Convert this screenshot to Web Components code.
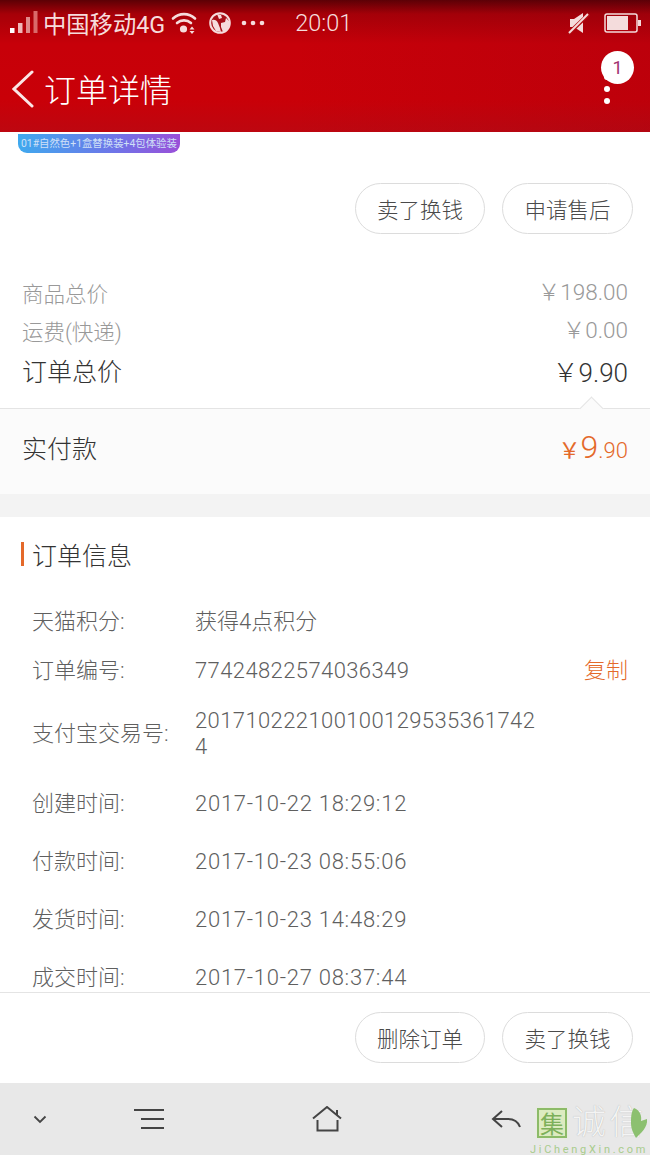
<!DOCTYPE html>
<html lang="zh">
<head>
<meta charset="utf-8">
<title>订单详情</title>
<style>
    html, body { margin: 0; padding: 0; background: #fff; }
    body { font-family: Roboto, "Noto Sans CJK SC", sans-serif; }
</style>
</head>
<body>
<order-page>
    <app-header slot="top" title="订单详情" badge="1"></app-header>
    <product-tag>01#自然色+1盒替换装+4包体验装</product-tag>
    <action-bar>
        <pill-button>卖了换钱</pill-button>
        <pill-button>申请售后</pill-button>
    </action-bar>
    <price-summary></price-summary>
    <info-list>
        <info-row label="天猫积分:" value="获得4点积分" height="49"></info-row>
        <info-row label="订单编号:" value="77424822574036349" action="复制" height="50" spacing=".4"></info-row>
        <info-row label="支付宝交易号:" value="2017102221001001295353617424" height="79" under="3" spacing=".4"></info-row>
        <info-row label="创建时间:" value="2017-10-22 18:29:12" height="58" spacing=".74"></info-row>
        <info-row label="付款时间:" value="2017-10-23 08:55:06" height="58" spacing=".74"></info-row>
        <info-row label="发货时间:" value="2017-10-23 14:48:29" height="58" spacing=".74"></info-row>
        <info-row label="成交时间:" value="2017-10-27 08:37:44" height="58" spacing=".74"></info-row>
    </info-list>
    <action-bar slot="bottom" footer>
        <pill-button>删除订单</pill-button>
        <pill-button>卖了换钱</pill-button>
    </action-bar>
    <nav-bar slot="nav"></nav-bar>
</order-page>

<script>
class OrderPage extends HTMLElement {
    constructor() {
        super();
        this.attachShadow({mode: "open"});
        this.shadowRoot.innerHTML = `
        <style>
            :host {
                display: flex;
                flex-direction: column;
                width: 650px;
                height: 1155px;
                overflow: hidden;
                background: #fff;
            }
            main {
                flex: 1;
                min-height: 0;
                overflow: hidden;
            }
        </style>
        <slot name="top"></slot>
        <main><slot></slot></main>
        <slot name="bottom"></slot>
        <slot name="nav"></slot>
        `;
    }
}
customElements.define("order-page", OrderPage);

class AppHeader extends HTMLElement {
    constructor() {
        super();
        this.attachShadow({mode: "open"});
        const title = this.getAttribute("title");
        const badge = this.getAttribute("badge");
        this.shadowRoot.innerHTML = `
        <style>
            :host {
                display: block;
                height: 132px;
                color: #fff;
                background:
                    linear-gradient(90deg, rgba(90, 0, 30, 0) 45%, rgba(90, 0, 30, .1) 100%),
                    linear-gradient(180deg, #5c0005 0, #a60008 14px, #c70009 44px, #c90008 100px, #bd0710 132px);
            }
            .status {
                display: flex;
                align-items: center;
                height: 46px;
                padding: 0 9px 0 10px;
                color: #f6dcdc;
            }
            .carrier { font-size: 23.300px; margin-left: 5px; white-space: nowrap; }
            .wifi { margin-left: 6px; }
            .globe { margin-left: 12px; }
            .dots { margin-left: 10px; }
            .time { font-size: 23.500px; margin-left: 30px; font-weight: 300; }
            .right { margin-left: auto; display: flex; align-items: center; gap: 14px; }
            .bar {
                display: flex;
                align-items: center;
                height: 86px;
                padding: 0 40px 0 12px;
            }
            h1 {
                margin: 0 0 3px 9px;
                font-size: 32px;
                font-weight: 300;
                font-family: "Noto Sans CJK SC", sans-serif;
            }
            .more {
                margin-left: auto;
                display: flex;
                flex-direction: column;
                gap: 6px;
                position: relative;
            }
            .badge {
                position: absolute;
                left: -3px;
                top: -23px;
                width: 33px;
                height: 33px;
                border-radius: 50%;
                background: #fff;
                color: #a03070;
                font-size: 18px;
                display: flex;
                align-items: center;
                justify-content: center;
            }
            .dot { width: 6px; height: 6px; border-radius: 50%; background: #fff; }
        </style>
        <div class="status">
            <svg width="28" height="24" viewBox="0 0 28 24">
                <rect x="0" y="17" width="4.500" height="5" fill="#fff"/>
                <rect x="8" y="12" width="4.500" height="10" fill="#f0b8b8"/>
                <rect x="16" y="6" width="4" height="16" fill="#e08a8a"/>
                <rect x="23.500" y="0" width="4" height="22" fill="#d96a6a"/>
            </svg>
            <span class="carrier">中国移动4G</span>
            <svg class="wifi" width="26" height="24" viewBox="0 0 26 24" fill="none" stroke="#f6dcdc" stroke-width="2.600" stroke-linecap="round">
                <path d="M2 7.500a16 16 0 0 1 22 0"/>
                <path d="M6 12a10.500 10.500 0 0 1 14 0"/>
                <circle cx="12.500" cy="18" r="3.600" fill="#f6dcdc" stroke="none"/>
                <path d="M21 15.500l2.500 3h-5zM18.500 20h5L21 23z" fill="#f6dcdc" stroke="none"/>
            </svg>
            <svg class="globe" width="22" height="22" viewBox="0 0 22 22">
                <circle cx="11" cy="11" r="9.800" fill="#a81018" stroke="#f6dcdc" stroke-width="2"/>
                <path d="M3 8q4-1 6 3l2 5 1 4-5-1-3-5zM12 11l4-1 1-4 3 3 0 5-3 5-3 1-2-5zM8 2l4 1 1 3-3 1z" fill="#f6dcdc"/>
            </svg>
            <svg class="dots" width="24" height="6" viewBox="0 0 24 6" fill="#f6dcdc">
                <circle cx="3" cy="3" r="2.300"/><circle cx="12" cy="3" r="2.300"/><circle cx="21" cy="3" r="2.300"/>
            </svg>
            <span class="time">20:01</span>
            <div class="right">
                <svg width="22" height="24" viewBox="0 0 22 24" fill="#f4dcdc">
                    <path d="M2 8h4l9-6v20l-9-6H2z"/>
                    <path d="M0 23L21 3" stroke="#b30a10" stroke-width="4"/>
                    <path d="M1 22L20 3" stroke="#f4dcdc" stroke-width="2"/>
                </svg>
                <svg width="37" height="20" viewBox="0 0 37 20">
                    <rect x="1" y="1" width="32" height="18" rx="2" fill="none" stroke="#f4dcdc" stroke-width="1.500"/>
                    <rect x="3" y="3" width="21" height="14" fill="#f4dcdc"/>
                    <rect x="34" y="7" width="3" height="6" fill="#f4dcdc"/>
                </svg>
            </div>
        </div>
        <div class="bar">
            <svg width="23" height="38" viewBox="0 0 23 38" fill="none" stroke="#fbe6e6" stroke-width="3" stroke-linecap="round">
                <path d="M20 2L2 19l18 17"/>
            </svg>
            <h1>${title}</h1>
            <div class="more">
                <div class="dot"></div>
                <div class="dot"></div>
                <div class="dot"></div>
                <div class="badge">${badge}</div>
            </div>
        </div>
        `;
    }
}
customElements.define("app-header", AppHeader);

class ProductTag extends HTMLElement {
    constructor() {
        super();
        this.attachShadow({mode: "open"});
        this.shadowRoot.innerHTML = `
        <style>
            :host {
                display: block;
                padding: 2px 0 0 18px;
                height: 49px;
            }
            span {
                display: inline-block;
                height: 19px;
                line-height: 20px;
                padding: 0 3px;
                width: 156px;
                border-radius: 0 0 9px 9px;
                background: linear-gradient(90deg, #3fa9ee, #6f74e8 60%, #9a4fd8);
                color: #cfe0f7;
                font-size: 10.400px;
                white-space: nowrap;
                overflow: hidden;
            }
        </style>
        <span><slot></slot></span>
        `;
    }
}
customElements.define("product-tag", ProductTag);

class ActionBar extends HTMLElement {
    constructor() {
        super();
        this.attachShadow({mode: "open"});
        this.shadowRoot.innerHTML = `
        <style>
            :host {
                display: flex;
                justify-content: flex-end;
                gap: 17px;
                padding: 0 17px 0 0;
                height: 85px;
                box-sizing: border-box;
            }
            :host([footer]) {
                height: 91px;
                padding-top: 19px;
                border-top: 1px solid #e4e4e4;
                background: #fff;
            }
        </style>
        <slot></slot>
        `;
    }
}
customElements.define("action-bar", ActionBar);

class PillButton extends HTMLElement {
    constructor() {
        super();
        this.attachShadow({mode: "open"});
        this.shadowRoot.innerHTML = `
        <style>
            :host {
                display: flex;
                align-items: center;
                justify-content: center;
                box-sizing: border-box;
                width: 131px;
                height: 51px;
                border: 1px solid #dcdcdc;
                border-radius: 26px;
                color: #4a4a4a;
                font-size: 21.500px;
                font-weight: 300;
                font-family: "Noto Sans CJK SC", sans-serif;
            }
            :host(:first-child) { width: 130px; }
        </style>
        <slot></slot>
        `;
    }
}
customElements.define("pill-button", PillButton);

class PriceSummary extends HTMLElement {
    constructor() {
        super();
        this.attachShadow({mode: "open"});
        this.shadowRoot.innerHTML = `
        <style>
            :host {
                display: block;
                font-weight: 300;
            }
            .lines {
                display: grid;
                grid-template-rows: 38px 38px 42px;
                align-content: start;
                height: 140px;
                padding: 5px 22px 0;
                box-sizing: border-box;
            }
            .line {
                display: flex;
                justify-content: space-between;
                align-items: center;
                color: #999;
            }
            .line.total { color: #333; }
            .line b { font-weight: 300; font-size: 22.500px; position: relative; top: -2px; }
            .line.total b { font-size: 26px; top: 0; }
            .line span { font-size: 21.500px; }
            .line.total span { font-size: 25px; }
            .pay {
                position: relative;
                display: flex;
                justify-content: space-between;
                align-items: center;
                height: 86px;
                padding: 0 22px 10px;
                background: #fbfbfb;
                border-top: 1px solid #e4e4e4;
                box-sizing: border-box;
                color: #333;
                font-size: 25px;
            }
            .pay::before {
                content: "";
                position: absolute;
                right: 50px;
                top: -9px;
                width: 16px;
                height: 16px;
                background: #fbfbfb;
                border-top: 1px solid #e4e4e4;
                border-left: 1px solid #e4e4e4;
                transform: rotate(45deg);
            }
            .amount { color: #e4692a; font-size: 22px; font-weight: 300; display: flex; align-items: baseline; }
            .amount u { text-decoration: none; font-weight: 400; }
            .amount i { font-style: normal; font-size: 32px; }
            .gap { height: 23px; background: #f3f3f3; }
        </style>
        <div class="lines">
            <div class="line"><span>商品总价</span><b>￥198.00</b></div>
            <div class="line"><span>运费(快递)</span><b>￥0.00</b></div>
            <div class="line total"><span>订单总价</span><b>￥9.90</b></div>
        </div>
        <div class="pay">
            <span>实付款</span>
            <div class="amount"><u>￥</u><i>9</i>.90</div>
        </div>
        <div class="gap"></div>
        `;
    }
}
customElements.define("price-summary", PriceSummary);

class InfoList extends HTMLElement {
    constructor() {
        super();
        this.attachShadow({mode: "open"});
        this.shadowRoot.innerHTML = `
        <style>
            :host { display: block; }
            h2 {
                display: flex;
                align-items: center;
                box-sizing: border-box;
                margin: 0;
                height: 80px;
                padding: 0 0 7px 21px;
                font-size: 25px;
                font-weight: 300;
                color: #333;
            }
            h2::before {
                content: "";
                width: 3px;
                height: 24px;
                margin-right: 8px;
                background: #e4692a;
            }
        </style>
        <h2>订单信息</h2>
        <slot></slot>
        `;
    }
}
customElements.define("info-list", InfoList);

class InfoRow extends HTMLElement {
    constructor() {
        super();
        this.attachShadow({mode: "open"});
        const action = this.getAttribute("action");
        const under = this.getAttribute("under") || 0;
        const spacing = this.getAttribute("spacing") || 0;
        this.shadowRoot.innerHTML = `
        <style>
            :host {
                display: grid;
                grid-template-columns: 163px 342px 1fr;
                align-items: center;
                box-sizing: border-box;
                height: ${this.getAttribute("height")}px;
                padding: 0 22px ${under}px 32px;
                font-size: 22px;
                font-weight: 300;
                line-height: 26px;
                color: #5f5f5f;
            }
            .value { word-break: break-all; letter-spacing: ${spacing}px; }
            .action { justify-self: end; color: #e4692a; }
        </style>
        <div class="label">${this.getAttribute("label")}</div>
        <div class="value">${this.getAttribute("value")}</div>
        ${action ? `<div class="action">${action}</div>` : ""}
        `;
    }
}
customElements.define("info-row", InfoRow);

class NavBar extends HTMLElement {
    constructor() {
        super();
        this.attachShadow({mode: "open"});
        this.shadowRoot.innerHTML = `
        <style>
            :host {
                display: block;
                position: relative;
                height: 72px;
                background: #e8e8e8;
            }
            .icons {
                display: grid;
                grid-template-columns: 80px 138px 218px 140px;
                height: 72px;
                align-items: center;
                justify-items: center;
            }
            .mark {
                position: absolute;
                right: 0;
                bottom: 0;
                width: 120px;
                height: 66px;
                overflow: hidden;
            }
            .row { position: absolute; left: 7px; top: 17px; display: flex; align-items: flex-start; gap: 5px; }
            .box {
                width: 30px;
                height: 30px;
                margin-top: 2px;
                background: #dcebc0;
                border: 2px solid #8cbb68;
                box-shadow: 0 0 3px #e4f0d0;
                box-sizing: border-box;
                color: #7db05a;
                font-size: 24px;
                line-height: 25px;
                text-align: center;
                font-family: "Noto Sans CJK SC", sans-serif;
            }
            .big {
                font-size: 34px;
                line-height: 32px;
                letter-spacing: 3.500px;
                color: #f4f4f4;
                font-weight: 300;
                font-family: "Liberation Sans", "Noto Sans CJK SC", sans-serif;
                text-shadow: 0 0 1px #aaa;
                white-space: nowrap;
            }
            .leaf {
                position: absolute;
                left: 98px;
                top: 19px;
            }
            .url {
                position: absolute;
                left: 0;
                bottom: -1px;
                font-size: 11px;
                letter-spacing: 2.700px;
                color: #a9cc8d;
                white-space: nowrap;
            }
        </style>
        <div class="icons">
            <svg width="14" height="9" viewBox="0 0 14 9" fill="none" stroke="#444" stroke-width="1.800"><path d="M1.500 1.500L7 7l5.500-5.500"/></svg>
            <svg width="30" height="22" viewBox="0 0 30 22" fill="none" stroke="#444" stroke-width="2.200"><path d="M0 2h30M7 11h23M7 20h23"/></svg>
            <svg width="30" height="26" viewBox="0 0 30 26" fill="none" stroke="#444" stroke-width="2"><path d="M1 12.500L15 1l14 11.500M5.500 14v10.500h20V14M25 4v5"/></svg>
            <svg width="30" height="20" viewBox="0 0 30 20" fill="none" stroke="#444" stroke-width="2"><path d="M11 2L2 10l9 8M2 10h15q9 0 12 8"/></svg>
        </div>
        <div class="mark">
            <div class="row">
                <div class="box">集</div>
                <div class="big">诚信</div>
            </div>
            <svg class="leaf" width="20" height="32" viewBox="0 0 20 32"><path d="M6 0c6 2 8 8 7 13l6-2c1 8-6 14-11 19-3-5-5-10-5-14C3 10 3 4 6 0z" fill="#8cc070"/></svg>
            <div class="url">JiChengXin.com</div>
        </div>
        `;
    }
}
customElements.define("nav-bar", NavBar);
</script>
</body>
</html>
